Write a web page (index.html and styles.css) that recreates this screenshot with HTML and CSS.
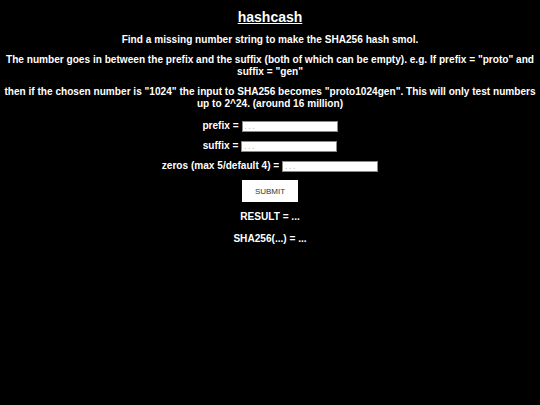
FILE: index.html
```html
<!DOCTYPE html>
<html>
<head>
<meta charset="utf-8">
<link rel="stylesheet" href="styles.css">
</head>
<body>
<main class="page">
  <h1 class="title">hashcash</h1>
  <p class="text">Find a missing number string to make the SHA256 hash smol.</p>
  <p class="text">The number goes in between the prefix and the suffix (both of which can be empty). e.g. If prefix = "proto" and suffix = "gen"</p>
  <p class="text">then if the chosen number is "1024" the input to SHA256 becomes "proto1024gen". This will only test numbers up to 2^24. (around 16 million)</p>
  <div class="field">prefix = <input class="inp" type="text" placeholder="..."></div>
  <div class="field">suffix = <input class="inp" type="text" placeholder="..."></div>
  <div class="field">zeros (max 5/default 4) = <input class="inp" type="text" placeholder="..."></div>
  <button class="btn">SUBMIT</button>
  <p class="text result">RESULT = ...</p>
  <p class="text result">SHA256(...) = ...</p>
</main>
</body>
</html>
```
FILE: styles.css
```css
html, body {
  background: #000;
}
body {
  margin: 0;
  padding: 0 2px;
  color: #fff;
  font-family: "Liberation Sans", Arial, sans-serif;
  font-weight: bold;
}
.page {
  display: flex;
  flex-direction: column;
  align-items: center;
  text-align: center;
}
.title {
  font-size: 14px;
  text-decoration: underline;
  margin: 9px 0 0;
  line-height: 16px;
}
.text {
  font-size: 10.1px;
  line-height: 12px;
  margin: 8px 0 0;
}
.title + .text { margin-top: 9px; }
.field {
  font-size: 10.1px;
  line-height: 12px;
  margin-top: 8px;
  display: flex;
  align-items: center;
  gap: 3px;
}
.field:first-of-type { margin-top: 10px; }
.inp {
  width: 96px;
  height: 11px;
  box-sizing: border-box;
  border: 1px solid #8a8a8a;
  background: #fff;
  padding: 0 2px;
  margin: 0;
  font-size: 7px;
  line-height: 9px;
  letter-spacing: 2px;
  font-family: "Liberation Sans", Arial, sans-serif;
  font-weight: bold;
}
.inp::placeholder { color: #c4c4c4; opacity: 1; }
.btn {
  margin-top: 8px;
  width: 56px;
  height: 22px;
  background: #fff;
  border: none;
  color: #333;
  font-family: "Liberation Sans", Arial, sans-serif;
  font-size: 8px;
  padding: 0;
}
.result { margin-top: 9px; }
.result + .result { margin-top: 10px; }
```
